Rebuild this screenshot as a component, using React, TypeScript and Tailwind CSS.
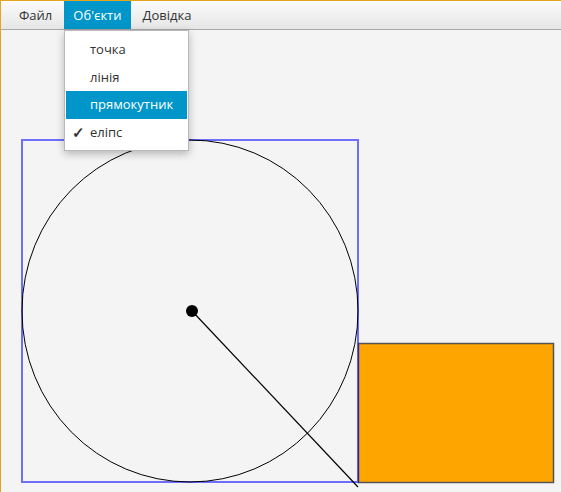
import { useState } from "react";

const shapes = ["точка", "лінія", "прямокутник", "еліпс"];

export default function App() {
  const [open] = useState(true);
  const hovered = "прямокутник";
  const checked = "еліпс";

  return (
    <div
      className="relative h-[492px] w-[561px] overflow-hidden border-l border-t border-[#e6a521] bg-[#f4f4f4] text-[13px] text-[#333]"
      style={{ fontFamily: '"Open Sans", "Noto Sans", sans-serif' }}
    >
      <div className="flex h-[29px] items-stretch gap-[3px] border-b border-[#a8a8a8] bg-gradient-to-b from-[#fbfbfb] to-[#e6e6e6] pl-[9px]">
        <button type="button" className="px-[9px] leading-[28px]">Файл</button>
        <button type="button" className="bg-[#0096c9] px-[9px] leading-[28px] text-white">Об'єкти</button>
        <button type="button" className="px-[9px] leading-[28px]">Довідка</button>
      </div>

      <svg className="block" width="560" height="462" viewBox="1 30 560 462">
        <rect x="358.5" y="343.5" width="195" height="139" fill="#ffa500" stroke="#555" strokeWidth="1.5" />
        <rect x="22" y="140" width="336" height="342" fill="none" stroke="rgba(0,0,255,0.55)" strokeWidth="2" />
        <ellipse cx="190" cy="311" rx="168" ry="171" fill="none" stroke="#000" strokeWidth="1" />
        <line x1="192" y1="311" x2="358" y2="487" stroke="#000" strokeWidth="1.2" />
        <circle cx="192" cy="311" r="6" fill="#000" />
      </svg>

      {open ? (
        <div className="absolute left-[63px] top-[29px] w-[125px] border border-[#b8b8b8] bg-white pb-[4px] pt-[5px] shadow-[0_3px_8px_rgba(0,0,0,0.25)]">
          {shapes.map((s) => (
            <div
              key={s}
              className={`relative mx-[1px] h-[27.5px] pl-[24px] leading-[27px] ${s === hovered ? "bg-[#0096c9] text-white" : ""}`}
            >
              {s === checked ? <span className="absolute left-[6px] top-0 text-[15px] font-bold">✓</span> : null}
              {s}
            </div>
          ))}
        </div>
      ) : null}
    </div>
  );
}
